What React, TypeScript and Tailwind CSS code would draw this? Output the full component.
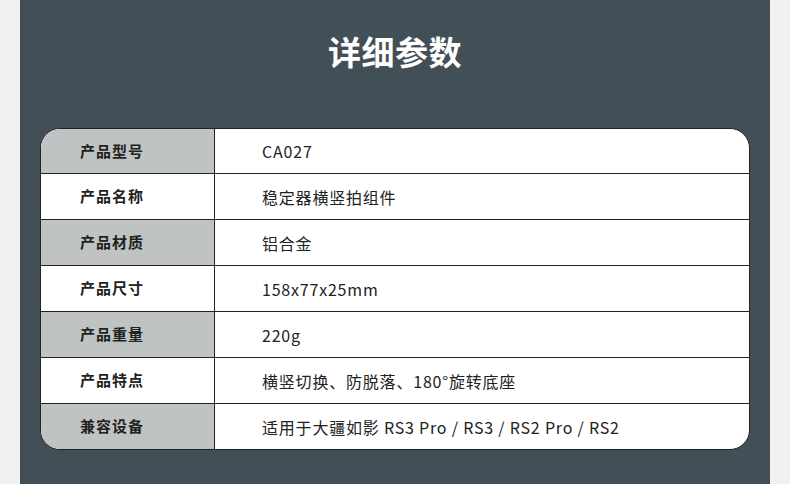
import React from "react";

const rows = [
  { label: "产品型号", value: "CA027" },
  { label: "产品名称", value: "稳定器横竖拍组件" },
  { label: "产品材质", value: "铝合金" },
  { label: "产品尺寸", value: "158x77x25mm" },
  { label: "产品重量", value: "220g" },
  { label: "产品特点", value: "横竖切换、防脱落、180°旋转底座" },
  { label: "兼容设备", value: "适用于大疆如影 RS3 Pro / RS3 / RS2 Pro / RS2" },
];

function App() {
  return (
    <div className="w-[790px] h-[484px] bg-[#f0f0f0] px-[20px] font-['Noto_Sans_CJK_SC',sans-serif]">
      <div className="h-full bg-[#434f57] px-[20px]">
        <div className="h-[100px] flex items-center justify-center pt-[2px]">
          <h1 className="text-white text-[33px] font-bold leading-none tracking-[0.5px]">
            详细参数
          </h1>
        </div>
        <div className="mt-[28px] border border-[#222] rounded-[20px] overflow-hidden bg-white">
          {rows.map((row, i) => (
            <div
              key={row.label}
              className={`flex ${i === 0 ? "h-[44px]" : "h-[46px] border-t border-[#222]"}`}
            >
              <div
                className={`w-[174px] shrink-0 border-r border-[#222] flex items-center pl-[39px] text-[15px] font-bold tracking-[1px] text-[#222] ${
                  i % 2 === 0 ? "bg-[#c0c3c4]" : "bg-white"
                }`}
              >
                {row.label}
              </div>
              <div className="flex-1 flex items-center pl-[47px] text-[16px] tracking-[0.8px] text-[#222]">
                {row.value}
              </div>
            </div>
          ))}
        </div>
      </div>
    </div>
  );
}

export default App;
